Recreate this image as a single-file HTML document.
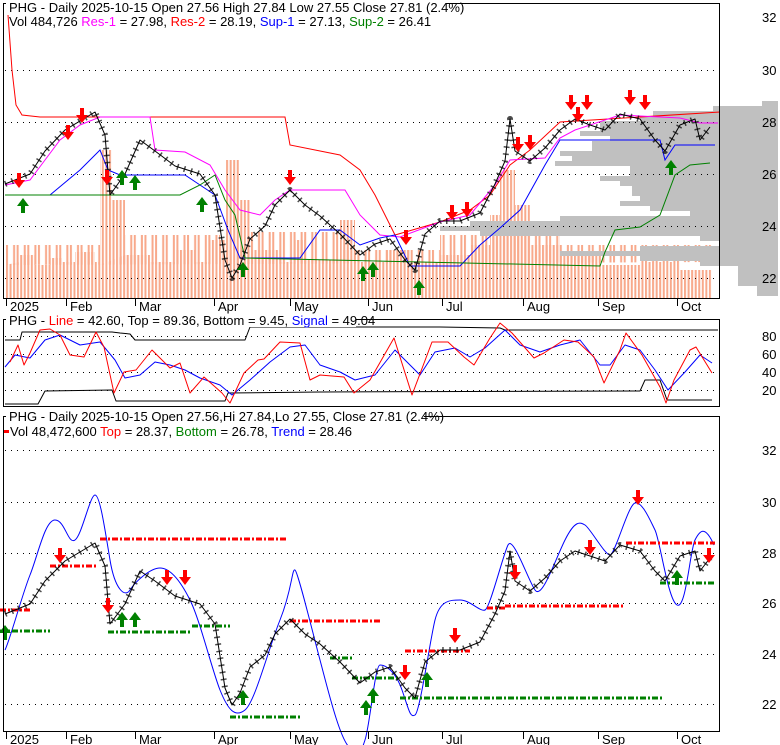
<!DOCTYPE html>
<html><head><meta charset="utf-8"><style>
html,body{margin:0;padding:0;background:#fff;width:780px;height:745px;overflow:hidden}
svg{display:block;font-family:"Liberation Sans",sans-serif}
</style></head><body>
<svg width="780" height="745" viewBox="0 0 780 745" xmlns="http://www.w3.org/2000/svg">
<defs>
<pattern id="vb" x="6" y="0" width="3.55" height="10" patternUnits="userSpaceOnUse"><rect x="0" y="0" width="2" height="10" fill="#f8a98b"/></pattern>
<pattern id="vb2" x="6" y="0" width="10.65" height="10" patternUnits="userSpaceOnUse"><rect x="0" y="0" width="2" height="10" fill="#f8a98b"/><rect x="7.1" y="0" width="2" height="10" fill="#f8a98b"/></pattern>
</defs>
<!-- volume -->
<polygon fill="url(#vb)" points="5,298 5,265 20,262 20,255 35,255 35,265 50,265 50,258 62,258 62,262 75,262 75,252 95,252 95,262 100,262 100,150 112,150 112,200 125,200 125,255 150,255 150,262 175,262 175,250 195,250 195,262 210,262 210,240 225,240 225,160 240,160 240,200 250,200 250,250 280,250 280,262 295,262 295,240 305,240 305,260 340,260 340,220 355,220 355,262 385,262 385,250 410,250 410,262 440,262 440,255 470,255 470,245 490,245 490,215 500,215 500,170 515,170 515,205 530,205 530,245 560,245 560,255 600,255 600,265 640,265 640,262 680,262 680,270 712,270 712,298"/>
<polygon fill="url(#vb2)" points="5,265 5,245 100,245 100,265 125,255 125,235 220,235 220,250 250,250 250,232 340,232 340,250 440,250 440,235 560,235 560,245 712,245 712,262"/>
<!-- volume profile -->
<g fill="#c0c0c0">
<rect x="762" y="101" width="16" height="5"/><rect x="713" y="106" width="65" height="5"/><rect x="653" y="111" width="125" height="5"/><rect x="640" y="116" width="138" height="5"/><rect x="600" y="121" width="178" height="10"/><rect x="580" y="131" width="198" height="5"/><rect x="610" y="136" width="168" height="5"/><rect x="592" y="141" width="186" height="10"/><rect x="560" y="151" width="218" height="5"/><rect x="572" y="156" width="206" height="5"/><rect x="555" y="161" width="223" height="5"/><rect x="630" y="166" width="148" height="10"/><rect x="600" y="176" width="178" height="5"/><rect x="620" y="181" width="158" height="5"/><rect x="632" y="186" width="146" height="10"/><rect x="640" y="196" width="138" height="5"/><rect x="620" y="201" width="158" height="5"/><rect x="650" y="206" width="128" height="5"/><rect x="690" y="211" width="88" height="5"/><rect x="560" y="216" width="218" height="5"/><rect x="470" y="221" width="308" height="5"/><rect x="440" y="226" width="338" height="5"/><rect x="480" y="231" width="298" height="5"/><rect x="700" y="236" width="78" height="5"/><rect x="720" y="241" width="58" height="5"/><rect x="640" y="246" width="138" height="5"/><rect x="560" y="251" width="218" height="5"/><rect x="640" y="256" width="138" height="5"/><rect x="700" y="261" width="78" height="5"/><rect x="738" y="266" width="40" height="20"/><rect x="757" y="286" width="21" height="10"/>
</g>
<!-- grid -->
<g stroke="#000" stroke-dasharray="1,5">
<line x1="5" x2="718" y1="70.5" y2="70.5"/><line x1="5" x2="718" y1="122.5" y2="122.5"/><line x1="5" x2="718" y1="174.5" y2="174.5"/><line x1="5" x2="718" y1="226.5" y2="226.5"/><line x1="5" x2="718" y1="278.5" y2="278.5"/>
<line x1="5" x2="718" y1="336.5" y2="336.5"/><line x1="5" x2="718" y1="354.5" y2="354.5"/><line x1="5" x2="718" y1="372.5" y2="372.5"/><line x1="5" x2="718" y1="390.5" y2="390.5"/>
<line x1="5" x2="718" y1="450.5" y2="450.5"/><line x1="5" x2="718" y1="502.5" y2="502.5"/><line x1="5" x2="718" y1="553.5" y2="553.5"/><line x1="5" x2="718" y1="603.5" y2="603.5"/><line x1="5" x2="718" y1="654.5" y2="654.5"/><line x1="5" x2="718" y1="704.5" y2="704.5"/>
</g>
<!-- top indicators -->
<g fill="none">
<polyline stroke="#ff0000" points="8,15 12,70 16,105 22,115 40,117 285,117 290,145 340,155 360,170 375,195 395,235 440,222 470,210 490,195 510,165 530,150 560,122 720,112"/>
<polyline stroke="#ff00ff" points="5,185 30,180 45,160 60,140 80,125 100,117 150,117 155,150 185,152 210,165 225,190 240,210 260,215 275,200 290,190 345,190 360,215 380,235 400,237 440,222 470,215 495,185 510,160 545,158 560,138 575,130 620,115 680,118 700,123 718,123"/>
<polyline stroke="#0000ff" points="5,195 50,195 80,170 100,150 108,170 120,175 150,175 185,175 200,185 215,195 228,230 240,258 300,258 320,230 340,230 360,245 380,238 395,235 410,266 460,266 480,245 500,228 520,210 545,165 560,140 600,140 660,140 665,160 675,145 715,145"/>
<polyline stroke="#008000" points="5,195 180,195 200,185 215,175 225,200 235,215 245,258 600,266 605,252 615,230 640,227 660,215 675,175 690,165 710,163"/>
</g>
<!-- top price -->
<g fill="none" stroke="#000" stroke-linejoin="round">
<polyline stroke-width="1" points="5,184 30,174 45,151 65,130 95,112 105,135 110,195 125,174 140,140 155,151 175,166 200,174 215,195 225,260 232,278 240,265 250,239 265,226 275,205 290,190 305,205 320,216 340,234 360,255 375,244 390,239 405,260 415,270 425,234 440,221 460,221 480,213 495,184 505,161 510,119 515,151 530,161 545,148 560,130 575,119 590,125 605,130 620,114 640,119 655,140 665,151 680,125 695,119 700,140 710,127"/>
<polyline stroke-width="6" stroke-dasharray="1.5,5.6" stroke-opacity="0.7" points="5,184 30,174 45,151 65,130 95,112 105,135 110,195 125,174 140,140 155,151 175,166 200,174 215,195 225,260 232,278 240,265 250,239 265,226 275,205 290,190 305,205 320,216 340,234 360,255 375,244 390,239 405,260 415,270 425,234 440,221 460,221 480,213 495,184 505,161 510,119 515,151 530,161 545,148 560,130 575,119 590,125 605,130 620,114 640,119 655,140 665,151 680,125 695,119 700,140 710,127"/>
</g>
<!-- oscillator -->
<g fill="none" stroke-linejoin="round">
<polyline stroke="#000" points="5,340 20,340 22,332 112,332 120,333 130,334 135,340 245,340 250,327 440,327 500,328 505,330 718,330"/>
<polyline stroke="#000" points="5,404 38,404 45,391 112,390 116,401 225,401 228,393 320,392 640,391 645,380 660,380 667,400 712,400"/>
<polyline stroke="#0000ff" points="5,367 15,355 30,358 45,340 60,335 80,345 100,342 115,360 125,378 140,375 155,362 170,365 185,370 200,378 220,385 232,395 250,380 270,362 290,347 305,345 320,365 340,372 355,380 375,375 395,350 405,360 420,375 435,352 455,348 470,357 485,348 505,330 520,345 540,352 560,345 580,340 600,365 610,365 625,345 640,350 655,370 668,390 685,372 700,355 712,363"/>
<polyline stroke="#ff0000" points="10,362 18,345 24,365 30,353 40,330 50,329 60,335 70,355 84,357 96,332 104,347 114,393 124,372 136,370 152,350 170,368 180,363 190,393 204,377 222,393 230,403 244,373 258,360 264,359 280,342 300,343 310,380 320,375 344,377 354,393 370,380 394,338 412,395 432,342 448,342 464,357 474,365 490,338 500,323 512,333 534,358 544,353 564,340 578,342 594,357 604,383 620,350 626,333 642,355 660,387 666,403 674,380 690,350 696,347 712,373"/>
</g>
<!-- bottom panel -->
<g fill="none">
<path stroke="#0000ff" d="M5,650 C10,640 22,595 30,575 S45,520 55,520 S68,545 75,540 S90,495 95,495 S105,530 110,560 S125,598 130,590 S150,568 160,568 S180,580 190,600 S212,670 220,690 S235,718 245,710 S268,650 280,620 S292,568 295,570 S312,630 320,660 S340,740 350,748 S360,755 365,740 S375,665 380,665 S395,670 402,690 S410,718 415,715 S430,640 435,620 S450,600 460,600 S480,612 485,610 S503,555 508,545 S528,580 535,590 S555,560 565,540 S580,522 585,525 S605,555 610,555 S628,505 635,503 S650,520 655,530 S668,600 677,605 S690,550 695,540 S705,525 714,545"/>
<g stroke-width="3" stroke-dasharray="6,2,2,2">
<line stroke="#ff0000" x1="0" x2="30" y1="610" y2="610"/><line stroke="#ff0000" x1="50" x2="98" y1="566" y2="566"/><line stroke="#ff0000" x1="100" x2="288" y1="539" y2="539"/><line stroke="#ff0000" x1="290" x2="380" y1="621" y2="621"/><line stroke="#ff0000" x1="405" x2="470" y1="651" y2="651"/><line stroke="#ff0000" x1="487" x2="505" y1="608" y2="608"/><line stroke="#ff0000" x1="505" x2="625" y1="606" y2="606"/><line stroke="#ff0000" x1="626" x2="715" y1="543" y2="543"/>
<line stroke="#008000" x1="0" x2="50" y1="631" y2="631"/><line stroke="#008000" x1="108" x2="192" y1="632" y2="632"/><line stroke="#008000" x1="192" x2="230" y1="626" y2="626"/><line stroke="#008000" x1="230" x2="300" y1="717" y2="717"/><line stroke="#008000" x1="330" x2="352" y1="658" y2="658"/><line stroke="#008000" x1="352" x2="400" y1="678" y2="678"/><line stroke="#008000" x1="400" x2="662" y1="698" y2="698"/><line stroke="#008000" x1="660" x2="715" y1="583" y2="583"/>
</g>
<g stroke="#000" stroke-linejoin="round">
<polyline stroke-width="1" points="5,614 30,604 45,581 65,561 95,543 105,566 110,624 125,604 140,571 155,581 175,596 200,604 215,624 225,688 232,705 240,693 250,667 265,655 275,634 290,619 305,634 320,644 340,662 360,683 375,672 390,667 405,688 415,698 425,662 440,650 460,650 480,642 495,614 505,591 510,551 515,581 530,591 545,578 560,561 575,551 590,556 605,561 620,545 640,551 655,571 665,581 680,556 695,551 700,571 710,558"/>
<polyline stroke-width="6" stroke-dasharray="1.5,5.6" stroke-opacity="0.7" points="5,614 30,604 45,581 65,561 95,543 105,566 110,624 125,604 140,571 155,581 175,596 200,604 215,624 225,688 232,705 240,693 250,667 265,655 275,634 290,619 305,634 320,644 340,662 360,683 375,672 390,667 405,688 415,698 425,662 440,650 460,650 480,642 495,614 505,591 510,551 515,581 530,591 545,578 560,561 575,551 590,556 605,561 620,545 640,551 655,571 665,581 680,556 695,551 700,571 710,558"/>
</g>
</g>
<!-- arrows -->
<defs>
<path id="dn" d="M-2,0h4v7h4l-6,8l-6,-8h4z" fill="#ff0000"/>
<path id="up" d="M0,0l6,8h-4v7h-4v-7h-4z" fill="#008000"/>
</defs>
<use href="#dn" x="19" y="173"/><use href="#dn" x="68" y="125"/><use href="#dn" x="82" y="108"/><use href="#dn" x="107" y="170"/><use href="#dn" x="290" y="170"/><use href="#dn" x="406" y="230"/><use href="#dn" x="452" y="205"/><use href="#dn" x="467" y="202"/><use href="#dn" x="518" y="137"/><use href="#dn" x="530" y="135"/><use href="#dn" x="571" y="95"/><use href="#dn" x="578" y="107"/><use href="#dn" x="587" y="95"/><use href="#dn" x="630" y="90"/><use href="#dn" x="645" y="95"/>
<use href="#up" x="23" y="198"/><use href="#up" x="122" y="170"/><use href="#up" x="135" y="175"/><use href="#up" x="202" y="197"/><use href="#up" x="243" y="262"/><use href="#up" x="363" y="266"/><use href="#up" x="373" y="262"/><use href="#up" x="419" y="280"/><use href="#up" x="671" y="160"/>
<use href="#dn" x="60" y="548"/><use href="#dn" x="108" y="598"/><use href="#dn" x="167" y="570"/><use href="#dn" x="185" y="570"/><use href="#dn" x="405" y="665"/><use href="#dn" x="455" y="628"/><use href="#dn" x="515" y="565"/><use href="#dn" x="590" y="540"/><use href="#dn" x="638" y="490"/><use href="#dn" x="709" y="548"/>
<use href="#up" x="5" y="625"/><use href="#up" x="122" y="612"/><use href="#up" x="135" y="612"/><use href="#up" x="243" y="690"/><use href="#up" x="366" y="700"/><use href="#up" x="373" y="688"/><use href="#up" x="427" y="672"/><use href="#up" x="677" y="570"/>
<!-- frames -->
<rect x="3.5" y="3.5" width="716" height="295" fill="none" stroke="#000"/>
<rect x="3.5" y="319.5" width="716" height="87" fill="none" stroke="#000"/>
<rect x="3.5" y="416.5" width="716" height="315" fill="none" stroke="#000"/>
<g font-size="13" fill="#000">
<rect x="6" y="0" width="440" height="14" fill="#fff"/>
<text x="9" y="12">PHG - Daily 2025-10-15 Open 27.56  High 27.84  Low 27.55  Close 27.81 (2.4%)</text>
<text x="9" y="26">Vol 484,726 <tspan fill="#ff00ff">Res-1</tspan> = 27.98, <tspan fill="#ff0000">Res-2</tspan> = 28.19, <tspan fill="#0000ff">Sup-1</tspan> = 27.13, <tspan fill="#008000">Sup-2</tspan> = 26.41</text>
<rect x="6" y="314" width="350" height="13" fill="#fff"/>
<text x="9" y="325">PHG - <tspan fill="#ff0000">Line</tspan> = 42.60, Top = 89.36, Bottom = 9.45, <tspan fill="#0000ff">Signal</tspan> = 49.04</text>
<rect x="6" y="410" width="418" height="14" fill="#fff"/>
<text x="9" y="421">PHG - Daily 2025-10-15 Open 27.56,Hi 27.84,Lo 27.55, Close 27.81 (2.4%)</text>
<rect x="4" y="430" width="5" height="3" fill="#ff0000"/>
<text x="10" y="436">Vol 48,472,600 <tspan fill="#ff0000">Top</tspan> = 28.37, <tspan fill="#008000">Bottom</tspan> = 26.78, <tspan fill="#0000ff">Trend</tspan> = 28.46</text>
<text x="762" y="22">32</text><text x="762" y="75">30</text><text x="762" y="127">28</text><text x="762" y="179">26</text><text x="762" y="231">24</text><text x="762" y="283">22</text>
<text x="762" y="341">80</text><text x="762" y="359">60</text><text x="762" y="377">40</text><text x="762" y="395">20</text>
<text x="762" y="455">32</text><text x="762" y="507">30</text><text x="762" y="558">28</text><text x="762" y="608">26</text><text x="762" y="659">24</text><text x="762" y="709">22</text>
<text x="10" y="311">2025</text><text x="70" y="311">Feb</text><text x="139" y="311">Mar</text><text x="218" y="311">Apr</text><text x="294" y="311">May</text><text x="372" y="311">Jun</text><text x="446" y="311">Jul</text><text x="527" y="311">Aug</text><text x="602" y="311">Sep</text><text x="681" y="311">Oct</text>
<text x="10" y="744">2025</text><text x="70" y="744">Feb</text><text x="139" y="744">Mar</text><text x="218" y="744">Apr</text><text x="294" y="744">May</text><text x="372" y="744">Jun</text><text x="446" y="744">Jul</text><text x="527" y="744">Aug</text><text x="602" y="744">Sep</text><text x="681" y="744">Oct</text>
</g>
<g stroke="#000">
<line x1="6.5" x2="6.5" y1="299" y2="306"/><line x1="66.5" x2="66.5" y1="299" y2="306"/><line x1="135.5" x2="135.5" y1="299" y2="306"/><line x1="214.5" x2="214.5" y1="299" y2="306"/><line x1="290.5" x2="290.5" y1="299" y2="306"/><line x1="368.5" x2="368.5" y1="299" y2="306"/><line x1="442.5" x2="442.5" y1="299" y2="306"/><line x1="523.5" x2="523.5" y1="299" y2="306"/><line x1="598.5" x2="598.5" y1="299" y2="306"/><line x1="677.5" x2="677.5" y1="299" y2="306"/>
<line x1="6.5" x2="6.5" y1="732" y2="739"/><line x1="66.5" x2="66.5" y1="732" y2="739"/><line x1="135.5" x2="135.5" y1="732" y2="739"/><line x1="214.5" x2="214.5" y1="732" y2="739"/><line x1="290.5" x2="290.5" y1="732" y2="739"/><line x1="368.5" x2="368.5" y1="732" y2="739"/><line x1="442.5" x2="442.5" y1="732" y2="739"/><line x1="523.5" x2="523.5" y1="732" y2="739"/><line x1="598.5" x2="598.5" y1="732" y2="739"/><line x1="677.5" x2="677.5" y1="732" y2="739"/>
</g>
</svg>
</body></html>
